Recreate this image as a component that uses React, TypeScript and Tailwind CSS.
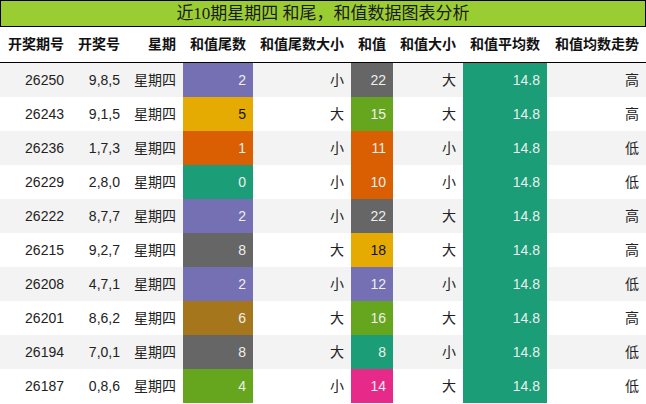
import React from "react";

const COLS = "grid grid-cols-[71px_56px_56px_70px_98px_42px_70px_84px_99px]";

type Row = {
  id: string;
  nums: string;
  tail: string;
  tailBg: string;
  tailDark?: boolean;
  tailSize: string;
  sum: string;
  sumBg: string;
  sumDark?: boolean;
  sumSize: string;
  trend: string;
};

const rows: Row[] = [
  { id: "26250", nums: "9,8,5", tail: "2", tailBg: "bg-[#7570b3]", tailSize: "小", sum: "22", sumBg: "bg-[#666666]", sumSize: "大", trend: "高" },
  { id: "26243", nums: "9,1,5", tail: "5", tailBg: "bg-[#e6ab02]", tailDark: true, tailSize: "大", sum: "15", sumBg: "bg-[#66a61e]", sumSize: "大", trend: "高" },
  { id: "26236", nums: "1,7,3", tail: "1", tailBg: "bg-[#d95f02]", tailSize: "小", sum: "11", sumBg: "bg-[#d95f02]", sumSize: "小", trend: "低" },
  { id: "26229", nums: "2,8,0", tail: "0", tailBg: "bg-[#1b9e77]", tailSize: "小", sum: "10", sumBg: "bg-[#d95f02]", sumSize: "小", trend: "低" },
  { id: "26222", nums: "8,7,7", tail: "2", tailBg: "bg-[#7570b3]", tailSize: "小", sum: "22", sumBg: "bg-[#666666]", sumSize: "大", trend: "高" },
  { id: "26215", nums: "9,2,7", tail: "8", tailBg: "bg-[#666666]", tailSize: "大", sum: "18", sumBg: "bg-[#e6ab02]", sumDark: true, sumSize: "大", trend: "高" },
  { id: "26208", nums: "4,7,1", tail: "2", tailBg: "bg-[#7570b3]", tailSize: "小", sum: "12", sumBg: "bg-[#7570b3]", sumSize: "小", trend: "低" },
  { id: "26201", nums: "8,6,2", tail: "6", tailBg: "bg-[#a6761d]", tailSize: "大", sum: "16", sumBg: "bg-[#66a61e]", sumSize: "大", trend: "高" },
  { id: "26194", nums: "7,0,1", tail: "8", tailBg: "bg-[#666666]", tailSize: "大", sum: "8", sumBg: "bg-[#1b9e77]", sumSize: "小", trend: "低" },
  { id: "26187", nums: "0,8,6", tail: "4", tailBg: "bg-[#66a61e]", tailSize: "小", sum: "14", sumBg: "bg-[#e7298a]", sumSize: "大", trend: "低" },
];

const headers = ["开奖期号", "开奖号", "星期", "和值尾数", "和值尾数大小", "和值", "和值大小", "和值平均数", "和值均数走势"];

export default function App() {
  return (
    <div
      className="w-[646px] h-[404px] bg-white overflow-hidden text-[14px] text-[#222]"
      style={{ fontFamily: '"Liberation Sans", "Noto Sans CJK SC", sans-serif' }}
    >
      <div
        className="h-[27px] bg-[#9acd32] border border-black flex items-center justify-center text-[17px] text-[#1a1a1a] leading-none"
        style={{ fontFamily: '"Liberation Serif", "Noto Sans CJK SC", serif' }}
      >
        近10期星期四 和尾，和值数据图表分析
      </div>
      <div className={`${COLS} h-[36px] border-b border-black font-bold text-[#111]`}>
        {headers.map((h) => (
          <div key={h} className="flex items-center justify-end px-[7px] whitespace-nowrap">
            {h}
          </div>
        ))}
      </div>
      {rows.map((r, i) => (
        <div key={r.id} className={`${COLS} h-[34px] ${i % 2 === 0 ? "bg-[#f3f3f3]" : "bg-white"}`}>
          <div className="flex items-center justify-end px-[7px]">{r.id}</div>
          <div className="flex items-center justify-end px-[7px]">{r.nums}</div>
          <div className="flex items-center justify-end px-[7px]">星期四</div>
          <div className={`flex items-center justify-end px-[7px] ${r.tailBg} ${r.tailDark ? "text-[#111]" : "text-[#eeeeee]"}`}>{r.tail}</div>
          <div className="flex items-center justify-end px-[7px]">{r.tailSize}</div>
          <div className={`flex items-center justify-end px-[7px] ${r.sumBg} ${r.sumDark ? "text-[#111]" : "text-[#eeeeee]"}`}>{r.sum}</div>
          <div className="flex items-center justify-end px-[7px]">{r.sumSize}</div>
          <div className="flex items-center justify-end px-[7px] bg-[#1b9e77] text-[#eeeeee]">14.8</div>
          <div className="flex items-center justify-end px-[7px]">{r.trend}</div>
        </div>
      ))}
    </div>
  );
}
